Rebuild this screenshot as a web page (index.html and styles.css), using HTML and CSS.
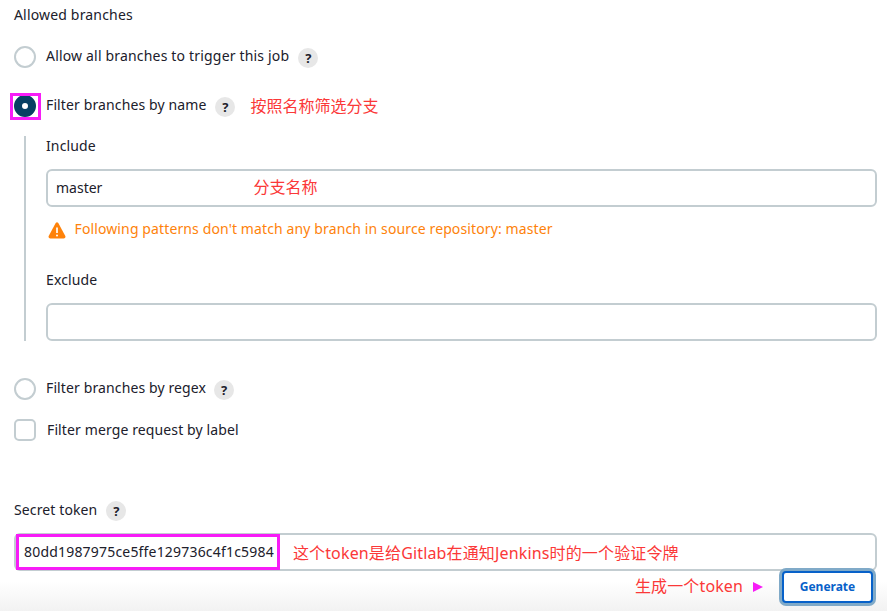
FILE: index.html
```
<!DOCTYPE html>
<html lang="en">
<head>
<meta charset="utf-8">
<title>Allowed branches</title>
<link rel="stylesheet" href="styles.css">
</head>
<body>
<main class="form">
  <div class="row heading"><span class="t">Allowed branches</span></div>
  <div class="row option-all"><span class="radio"></span><span class="t label">Allow all branches to trigger this job</span><span class="help">?</span></div>
  <div class="row option-name"><span class="radio checked"></span><span class="t label">Filter branches by name</span><span class="help">?</span><span class="note note-name">按照名称筛选分支</span></div>
  <section class="nested">
    <div class="row field-label"><span class="t">Include</span></div>
    <div class="input"><span class="t value">master</span><span class="note note-branch">分支名称</span></div>
    <div class="row warning">
      <svg width="18" height="17" viewBox="0 0 18 17"><path d="M7.7 1Q9-.5 10.300 1L17.300 14Q18 16.500 15.700 16.500H2.300Q0 16.500.7 14Z" fill="#fe820a"/><path d="M9 5.500V11" stroke="#fff" stroke-width="1.700"/><circle cx="9" cy="13.500" r="1" fill="#fff"/></svg>
      <span class="t">Following patterns don't match any branch in source repository: master</span>
    </div>
    <div class="row field-label exclude"><span class="t">Exclude</span></div>
    <div class="input"></div>
  </section>
  <div class="row option-regex"><span class="radio"></span><span class="t label">Filter branches by regex</span><span class="help">?</span></div>
  <div class="row option-merge"><span class="radio square"></span><span class="t label">Filter merge request by label</span></div>
  <div class="row secret"><span class="t">Secret token</span><span class="help">?</span></div>
  <div class="input token"><span class="t">80dd1987975ce5ffe129736c4f1c5984</span><span class="note note-token">这个token是给Gitlab在通知Jenkins时的一个验证令牌</span></div>
  <footer class="footer"><span class="note note-gen">生成一个token</span><span class="arrow"></span><button class="generate">Generate</button></footer>
</main>
</body>
</html>
```
FILE: styles.css
```
*, *::before, *::after { box-sizing: border-box; }
body {
  margin: 0;
  background: #fff;
  color: #20202b;
  font-family: "Noto Sans", "Noto Sans CJK SC", sans-serif;
  font-size: 14px;
  line-height: 20px;
}
.form { width: 887px; height: 614px; overflow: hidden; }
.row { display: flex; align-items: center; height: 22px; padding-left: 14px; white-space: nowrap; }
.t { flex: none; white-space: nowrap; letter-spacing: .12px; }
.heading { margin-top: 4px; }
.heading .t { letter-spacing: .17px; }
.option-all { margin-top: 20px; }
.option-all .t { letter-spacing: .18px; }
.option-name { margin-top: 27px; }
.radio { flex: none; width: 22px; height: 22px; border: 2px solid #c3cdd1; border-radius: 50%; background: #fff; }
.radio.square { border-radius: 5px; }
.radio.checked { position: relative; border: 8px solid #073f63; }
.radio.checked::after { content: ""; position: absolute; left: -12px; top: -10px; width: 31px; height: 27px; border: 3px solid #f71cf7; }
.label { margin-left: 10px; margin-top: -2px; }
.help { flex: none; width: 20px; height: 20px; margin-left: 9px; margin-top: 2px; border-radius: 50%; background: #e7e7e7; font-size: 13px; font-weight: 700; text-align: center; line-height: 20px; }
.option-regex .help { margin-left: 8px; }
.note { flex: none; color: #fb3838; font-size: 16px; line-height: 22px; white-space: nowrap; }
.note-name { margin-left: 15px; }
.nested { margin: 19px 10px 0 24px; height: 205px; border-left: 2px solid #c3cdd1; padding-left: 20px; }
.nested .row { padding-left: 0; }
.field-label { height: 20px; margin-bottom: 13px; }
.input { display: flex; align-items: center; height: 38px; border: 2px solid #c3cdd1; border-radius: 6px; background: #fff; padding-left: 8px; }
.value { letter-spacing: 0; }
.note-branch { margin-left: 151px; margin-top: -2px; }
.warning { margin-top: 12px; height: 20px; color: #fe820a; }
.warning svg { flex: none; margin: 3px 8.500px 0 2px; }
.exclude { margin-top: 31px; }
.option-regex { margin-top: 37px; }
.option-merge { margin-top: 19px; }
.option-merge .label { margin-left: 11px; margin-top: 0; }
.secret { margin-top: 58px; }
.token { position: relative; margin: 12px 10px 0 14px; }
.token .t { letter-spacing: .19px; }
.token::before { content: ""; position: absolute; left: 0; top: -1px; width: 264px; height: 36px; border: 3px solid #f71cf7; }
.note-token { margin-left: 19px; margin-top: 2px; letter-spacing: .15px; }
.footer { display: flex; align-items: flex-start; justify-content: flex-end; height: 40px; padding-right: 14px; background: linear-gradient(#fff 0, #fff 10px, #f2f2f2 40px); }
.note-gen { margin-top: 4px; letter-spacing: .12px; }
.arrow { margin: 11px 19px 0 10px; border-left: 10px solid #f71cf7; border-top: 5px solid transparent; border-bottom: 5px solid transparent; }
.generate { position: relative; flex: none; width: 91px; height: 32px; padding: 0; border: 2px solid #0761c9; border-radius: 4px; background: #fff; color: #0761c9; box-shadow: 0 0 0 3px #80aac8; font: 700 12px/18px "Noto Sans", sans-serif; }
```
